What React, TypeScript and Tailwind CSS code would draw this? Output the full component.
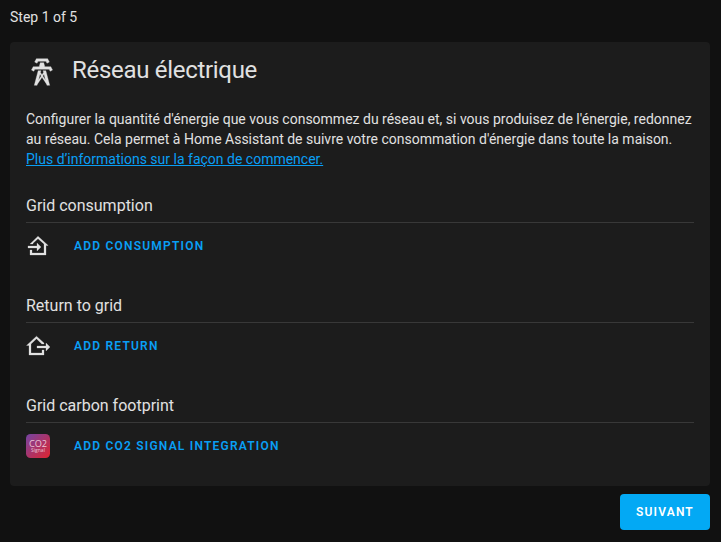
import React from 'react';

type IconProps = { d: string; size?: string };

function Icon({ d, size = 'size-6' }: IconProps) {
  return (
    <svg viewBox="0 0 24 24" className={`${size} shrink-0 fill-[#e1e1e1] stroke-[#e1e1e1]`} strokeWidth="0.25" aria-hidden="true">
      <path d={d} />
    </svg>
  );
}

const TOWER =
  'M8.28,5.45L6.5,4.55L7.76,2H16.23L17.5,4.55L15.72,5.44L15,4H9L8.28,5.45M18.62,8H14.09L13.3,5H10.7L9.91,8H5.38L4.1,10.55L5.89,11.44L6.62,10H17.38L18.1,11.45L19.89,10.56L18.62,8M17.77,22H15.7L15.46,21.1L12,15.9L8.53,21.1L8.3,22H6.23L9.12,11H11.19L10.83,12.35L12,14.1L13.16,12.35L12.81,11H14.88L17.77,22M11.4,15L10.5,13.65L9.32,18.13L11.4,15M14.68,18.12L13.5,13.64L12.6,15L14.68,18.12Z';
const HOME_IN =
  'M15 13L11 17V14H2V12H11V9L15 13M4 21V16H6V19H18V9.9L12 4.7L7 9.2V10H4L12 2.2L22.2 11.5H20V21H4Z';
const HOME_OUT =
  'M24 13L20 17V14H11V12H20V9L24 13M3 21V11.5H0.5L10.5 2.2L18 9V10H15.8L10.5 4.8L5 9.9V19H16V16H18V21H3Z';

function Co2Logo() {
  return (
    <svg viewBox="0 0 24 24" className="size-6 shrink-0" aria-hidden="true">
      <defs>
        <linearGradient id="co2" x1="0" y1="0" x2="1" y2="1">
          <stop offset="0" stopColor="#7444a4" />
          <stop offset="1" stopColor="#e0242f" />
        </linearGradient>
      </defs>
      <rect width="24" height="24" rx="4.5" fill="url(#co2)" />
      <text x="12" y="12.8" textAnchor="middle" fontSize="9.2" fontFamily="Open Sans, sans-serif" fill="#ecc4d4">CO2</text>
      <text x="12" y="17.8" textAnchor="middle" fontSize="5" fontFamily="Open Sans, sans-serif" fill="#ecc4d4">Signal</text>
    </svg>
  );
}

type SectionProps = { title: string; action: string; icon: React.ReactNode };

function Section({ title, action, icon }: SectionProps) {
  return (
    <section className="h-[100px]">
      <h3 className="h-[27px] border-b border-[#383838] text-base leading-[20px]">{title}</h3>
      <div className="flex h-[46px] items-center gap-6">
        {icon}
        <button className="text-xs font-semibold uppercase tracking-[1.21px] text-[#099ff5]">{action}</button>
      </div>
    </section>
  );
}

export default function App() {
  return (
    <main className="h-[542px] w-[721px] bg-[#111111] px-2.5 font-[Roboto,sans-serif] text-sm text-[#e1e1e1]">
      <p className="h-[42px] pt-[7px] leading-5">Step 1 of 5</p>
      <div className="h-[444px] w-[700px] rounded bg-[#1c1c1c] px-4">
        <h2 className="flex h-[67px] items-start gap-3.5 pt-3 text-2xl leading-8 tracking-[-0.3px]">
          <span className="pt-0.5"><Icon d={TOWER} size="size-8" /></span>
          <span>Réseau électrique</span>
        </h2>
        <p className="h-[87px] whitespace-nowrap leading-5">
          Configurer la quantité d'énergie que vous consommez du réseau et, si vous produisez de l'énergie, redonnez
          <br />
          au réseau. Cela permet à Home Assistant de suivre votre consommation d'énergie dans toute la maison.
          <br />
          <a href="#" className="text-[#099ff5] underline">Plus d’informations sur la façon de commencer.</a>
        </p>
        <Section title="Grid consumption" action="Add consumption" icon={<Icon d={HOME_IN} />} />
        <Section title="Return to grid" action="Add return" icon={<Icon d={HOME_OUT} />} />
        <Section title="Grid carbon footprint" action="Add CO2 signal integration" icon={<Co2Logo />} />
      </div>
      <div className="flex w-[700px] justify-end pt-2">
        <button className="h-9 w-[90px] rounded bg-[#03a9f4] text-xs font-semibold tracking-[1.15px] text-white">SUIVANT</button>
      </div>
    </main>
  );
}
